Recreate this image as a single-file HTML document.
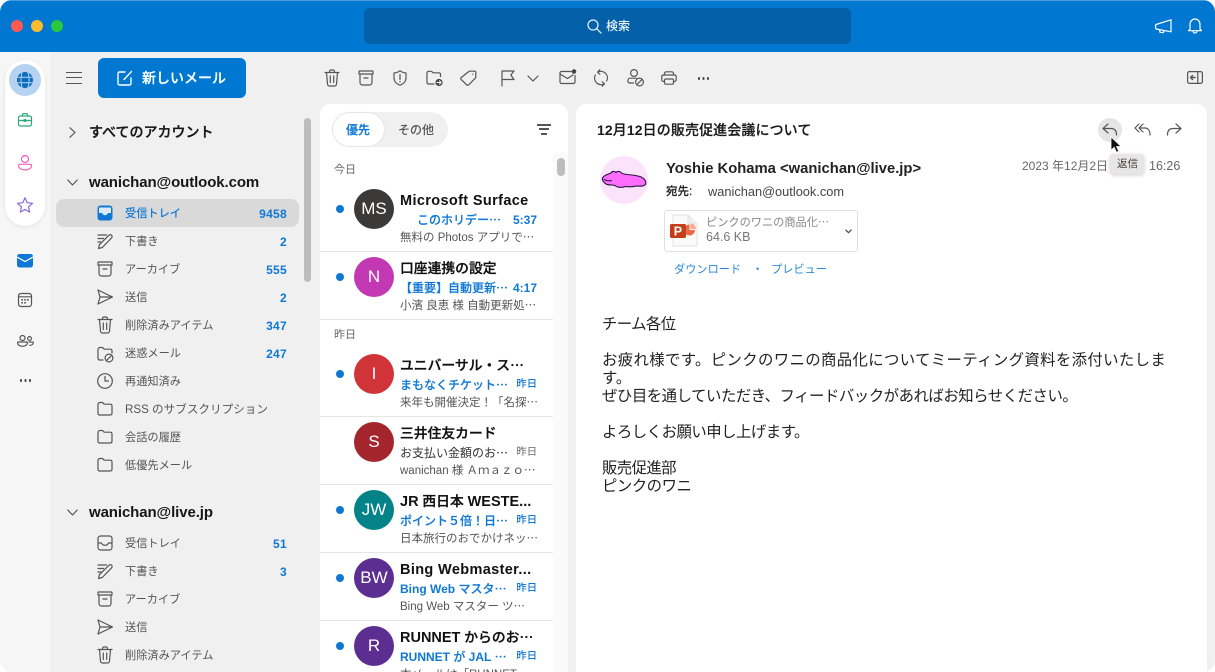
<!DOCTYPE html>
<html lang="ja"><head><meta charset="utf-8"><title>Outlook</title>
<style>
html,body{margin:0;padding:0;background:#fff}
body{width:1215px;height:672px;overflow:hidden;position:relative;font-family:"Liberation Sans","Noto Sans CJK JP",sans-serif;color:#1a1a1a}
#w{position:absolute;left:0;top:0;width:1215px;height:672px;background:#f0f0f0;border-radius:12px;overflow:hidden}
.t{position:absolute;white-space:nowrap;line-height:18px}
.a{position:absolute}
b{-webkit-text-stroke:0;font-weight:700}
svg.i{position:absolute;fill:none;stroke:#555;stroke-width:1.2;stroke-linecap:round;stroke-linejoin:round;overflow:visible}
.f{font-size:11.2px;color:#555;left:125px;margin-top:1px}
.c{font-size:12px;font-weight:700;color:#0f78d4;right:928px;text-align:right;letter-spacing:.3px;margin-top:1px}
.h{font-size:15px;font-weight:700;letter-spacing:-.1px;color:#161616;left:89px}
.sep{position:absolute;left:320px;width:233px;height:1px;background:#e6e6e6}
.dot{position:absolute;left:336px;width:8px;height:8px;border-radius:50%;background:#0f78d4}
.av{position:absolute;left:354px;width:40px;height:40px;border-radius:50%;color:#fff;text-align:center;line-height:40px;font-size:17px}
.n{font-size:13.8px;font-weight:500;-webkit-text-stroke:.3px #111;color:#111;left:400px;margin-top:1px}
.n b{font-size:14.5px}
.l{letter-spacing:.36px}
.s{font-size:12px;font-weight:500;-webkit-text-stroke:.15px #0f78d4;color:#0f78d4;left:400px;margin-top:1px}
.d{font-size:12px;font-weight:700;color:#0f78d4;right:678px;text-align:right;margin-top:1px}
.y{font-size:10.3px;font-weight:500}
.p{font-size:11.5px;color:#555;left:400px;margin-top:1px}
.b{font-size:15.4px;color:#222;left:602px}
</style></head><body>
<div id="w">
<svg width="0" height="0" style="position:absolute"><defs>
<symbol id="trash" viewBox="0 0 16 18"><path d="M1 3.500h14M5.500 3.500V2.600C5.500 1.700 6.200 1 7 1h2c.8 0 1.500.7 1.500 1.600v.9M2.500 3.500l1 11.500c.1 1.100.9 2 2 2h5c1.100 0 1.900-.9 2-2l1-11.500M6.300 7v6.500M9.700 7v6.500"/></symbol>
<symbol id="arch" viewBox="0 0 16 16"><path d="M1.500 1h13c.3 0 .5.200.5.500V4H1V1.500c0-.3.200-.5.500-.5zM2 4v8.500C2 13.900 3.100 15 4.500 15h7c1.400 0 2.500-1.100 2.500-2.500V4M6 8h4"/></symbol>
<symbol id="send" viewBox="0 0 16 16"><path d="M1 1l14.500 7L1 15l2-7zM3 8h12"/></symbol>
<symbol id="draft" viewBox="0 0 16 16"><path d="M1 2h8.500M1 5.500h5.500M1 9h3M1.500 15.500l.9-3.800L12 2.200c.7-.7 2-.7 2.600 0s.7 1.900 0 2.600L5.300 14.500z"/></symbol>
<symbol id="folder" viewBox="0 0 16 16"><path d="M1 3.500C1 2.400 1.700 1.500 2.800 1.500h2.500c.9 0 1.300 1.700 2.200 1.700h5.700c1.100 0 1.800.8 1.800 1.800v7.300c0 1-.7 1.700-1.800 1.700H2.800C1.700 14 1 13.300 1 12.300z"/></symbol>
<symbol id="inbox" viewBox="0 0 16 16"><rect x="1" y="1" width="14" height="14" rx="2.500"/><path d="M1 8h3.500c.6 1.500 2 2.300 3.500 2.300s2.900-.8 3.500-2.300H15"/></symbol>
</defs></svg>

<!-- title bar -->
<div class="a" style="left:0;top:0;width:1215px;height:52px;background:#0078d2;border-top:1px solid #4b9fe0;box-sizing:border-box"></div>
<div class="a" style="left:11px;top:20px;width:12px;height:12px;border-radius:50%;background:#fc5a52"></div>
<div class="a" style="left:31px;top:20px;width:12px;height:12px;border-radius:50%;background:#fdbc2e"></div>
<div class="a" style="left:51px;top:20px;width:12px;height:12px;border-radius:50%;background:#28c83f"></div>
<div class="a" style="left:364px;top:8px;width:487px;height:36px;border-radius:6px;background:#0460a8"></div>
<svg class="i" style="left:587px;top:19px;stroke:#dcecf9;stroke-width:1.300" width="15" height="15" viewBox="0 0 15 15"><circle cx="6" cy="6" r="5"/><path d="M9.700 9.700L14 14"/></svg>
<span class="t" style="left:606px;top:17px;font-size:12px;color:#eaf4fc;font-weight:500">検索</span>
<svg class="i" style="left:1155px;top:19px;stroke:#fff" width="17" height="15" viewBox="0 0 17 15"><path d="M1 5.500L16 .8v12L1 10c-.6-1.500-.6-3 0-4.500zM4.500 11l.5 2.300 3.300.4.500-1.800"/></svg>
<svg class="i" style="left:1188px;top:18px;stroke:#fff" width="14" height="16" viewBox="0 0 14 16"><path d="M2 11V6.500C2 3.400 4.200 1 7 1s5 2.400 5 5.500V11l1.500 1.700H.5zM5 13c.1 1.200 1 2 2 2s1.900-.8 2-2"/></svg>

<!-- rail -->
<div class="a" style="left:0;top:52px;width:50px;height:620px;background:#f6f6f6"></div>
<div class="a" style="left:5px;top:60px;width:40px;height:166px;border-radius:20px;background:#fff;box-shadow:0 1px 4px rgba(0,0,0,.08)"></div>
<div class="a" style="left:9px;top:64px;width:32px;height:32px;border-radius:50%;background:#b5d3f0"></div>
<svg class="a" style="left:17px;top:72px" width="16" height="16" viewBox="0 0 16 16"><circle cx="8" cy="8" r="8" fill="#0b6cbf"/><path d="M0 5.300h16M0 10.700h16M5.200 0c-1.600 5-1.600 11 0 16M10.800 0c1.600 5 1.600 11 0 16" fill="none" stroke="#b5d3f0" stroke-width="1"/></svg>
<svg class="i" style="left:18px;top:113px;stroke:#2fa67c" width="14" height="14" viewBox="0 0 14 14"><rect x=".5" y="3" width="13" height="10" rx="1.800"/><path d="M4.500 3V1.800C4.500 1 5 .6 5.700.6h2.600c.7 0 1.200.4 1.200 1.200V3M.5 7.500h13"/><rect x="6" y="6.700" width="2" height="1.600" fill="#2fa67c"/></svg>
<svg class="i" style="left:18px;top:155px;stroke:#f15ec0" width="14" height="16" viewBox="0 0 14 16"><circle cx="7" cy="4" r="3.500"/><path d="M1.800 9.300h10.400c.8 0 1.300.5 1.300 1.200 0 2.800-3 4.500-6.500 4.500S.5 13.300.5 10.500c0-.7.500-1.200 1.300-1.200z"/></svg>
<svg class="i" style="left:17px;top:197px;stroke:#8a6bd6" width="16" height="16" viewBox="0 0 16 16"><path d="M8 .8l2.200 4.900 5.300.6-4 3.500 1.200 5.300L8 12.400l-4.700 2.700 1.200-5.300-4-3.500 5.300-.6z"/></svg>
<svg class="a" style="left:17px;top:254px" width="16" height="14" viewBox="0 0 16 14"><rect width="16" height="13.500" rx="2.500" fill="#0f78d4"/><path d="M0 3l8 4.500L16 3" fill="none" stroke="#fff" stroke-width="1.200"/></svg>
<svg class="i" style="left:18px;top:293px" width="14" height="14" viewBox="0 0 14 14"><rect x=".5" y=".5" width="13" height="13" rx="2.500"/><path d="M.5 3.800h13"/><rect x="3.300" y="6" width="1.600" height="1.600" fill="#555" stroke="none"/><rect x="6.200" y="6" width="1.600" height="1.600" fill="#555" stroke="none"/><rect x="9.100" y="6" width="1.600" height="1.600" fill="#555" stroke="none"/><rect x="3.300" y="9" width="1.600" height="1.600" fill="#555" stroke="none"/><rect x="6.200" y="9" width="1.600" height="1.600" fill="#555" stroke="none"/></svg>
<svg class="i" style="left:17px;top:335px" width="17" height="12" viewBox="0 0 17 12"><circle cx="5.500" cy="3" r="2.500"/><circle cx="12.500" cy="3.500" r="1.900"/><path d="M1.500 7h8c.5 0 .9.300.9.800C10.400 10 8 11.300 5.500 11.300S.6 10 .6 7.800c0-.5.400-.8.900-.8zM12 7h3.500c.5 0 .8.300.8.700 0 1.500-1.500 2.600-3.600 2.600"/></svg>
<div class="a" style="left:19.500px;top:379px;width:2.500px;height:2.500px;border-radius:50%;background:#444;box-shadow:4.500px 0 0 #444,9px 0 0 #444"></div>

<!-- hamburger & new mail -->
<div class="a" style="left:66px;top:72px;width:16px;height:1.300px;background:#555;box-shadow:0 5px 0 #555,0 11px 0 #555"></div>
<div class="a" style="left:98px;top:58px;width:148px;height:40px;border-radius:6px;background:#0078d2"></div>
<svg class="i" style="left:117px;top:70px;stroke:#fff;stroke-width:1.400" width="16" height="16" viewBox="0 0 16 16"><path d="M8 2H2.500C1.700 2 1 2.700 1 3.500v10c0 .8.700 1.500 1.500 1.500h10c.8 0 1.500-.7 1.500-1.500V8M7 9.500L14.500 1.500"/></svg>
<span class="t" style="left:142px;top:69px;font-size:14px;color:#fff;font-weight:500;-webkit-text-stroke:.2px #fff">新しいメール</span>

<!-- toolbar -->
<svg class="i" style="left:324px;top:69px" width="16" height="18"><use href="#trash"/></svg>
<svg class="i" style="left:358px;top:70px" width="16" height="16"><use href="#arch"/></svg>
<svg class="i" style="left:393px;top:70px" width="14" height="16" viewBox="0 0 14 16"><path d="M7 .8c1.800 1.300 3.800 2 6 2.200v5c0 3.300-2.500 6-6 7.200C3.500 14 1 11.300 1 8V3c2.200-.2 4.200-.9 6-2.200zM7 4.500v5M7 11.500v.3"/></svg>
<svg class="i" style="left:426px;top:70px" width="18" height="18" viewBox="0 0 18 18"><path d="M8 14H2.500C1.500 14 1 13.300 1 12.300V3C1 2 1.700 1.300 2.700 1.300h2.500c.9 0 1.300 1.500 2.200 1.500h5.500c1 0 1.600.8 1.600 1.700v2"/><circle cx="13" cy="12.500" r="4.200" fill="#444" stroke="#f0f0f0"/><path d="M11 12.500h4M13.500 10.800l1.600 1.700-1.600 1.700" stroke="#fff" stroke-width="1"/></svg>
<svg class="i" style="left:460px;top:70px" width="17" height="16" viewBox="0 0 17 16"><path d="M9.800 1.200h5c.6 0 1 .4 1 1v4.900c0 .5-.2.800-.5 1.100l-6.700 6.700c-.6.500-1.300.5-1.800 0L1.100 9.400c-.5-.6-.5-1.300 0-1.800L8.700 1.600c.3-.3.700-.4 1.100-.4zM12.800 4.200v.1"/></svg>
<svg class="i" style="left:501px;top:70px" width="14" height="17" viewBox="0 0 14 17"><path d="M1 16V1h12L9.800 5 13 9.500H1"/></svg>
<svg class="i" style="left:527px;top:75px" width="12" height="7" viewBox="0 0 12 7"><path d="M1 1l5 5 5-5"/></svg>
<svg class="i" style="left:559px;top:69px" width="18" height="16" viewBox="0 0 18 16"><path d="M12 2.500H2.500C1.700 2.500 1 3.200 1 4v9c0 .8.700 1.500 1.500 1.500h12c.8 0 1.500-.7 1.500-1.500V6.500M1 5l7.500 4.500L14 6"/><circle cx="15" cy="2.500" r="2.300" fill="#444" stroke="none"/></svg>
<svg class="i" style="left:593px;top:69px" width="16" height="18" viewBox="0 0 16 18"><path d="M4.500 3.200C6.700 1.800 10 2 12.300 4c2.400 2.400 2.800 5.500 1.300 8M11.500 14.800C9.300 16.200 6 16 3.700 14 1.300 11.600.9 8.500 2.400 6M6.800.8L4.500 3.200l2.300 2M9.200 17.200l2.300-2.400-2.300-2"/></svg>
<svg class="i" style="left:627px;top:69px" width="17" height="18" viewBox="0 0 17 18"><circle cx="7" cy="4" r="3.400"/><path d="M6.500 14H3C1.800 14 .8 13 .8 12c0-1.600 1-2.800 2.500-2.800h6"/><circle cx="12.500" cy="13" r="3.900"/><path d="M9.800 15.700l5.400-5.400"/></svg>
<svg class="i" style="left:661px;top:71px" width="16" height="14" viewBox="0 0 16 14"><path d="M3.500 4V2.500C3.500 1.500 4.300.8 5.200.8h5.600c.9 0 1.700.7 1.700 1.700V4M3.500 10.500H2.500C1.500 10.500.8 9.700.8 8.800V5.700C.8 4.700 1.500 4 2.500 4h11c1 0 1.700.7 1.700 1.700v3.100c0 .9-.7 1.700-1.700 1.700h-1"/><rect x="3.500" y="8" width="9" height="5.200" rx="1.200"/></svg>
<div class="a" style="left:697.500px;top:77px;width:2.500px;height:2.500px;border-radius:50%;background:#444;box-shadow:4.500px 0 0 #444,9px 0 0 #444"></div>
<svg class="i" style="left:1187px;top:71px" width="16" height="13" viewBox="0 0 16 13"><rect x=".6" y=".6" width="14.800" height="11.800" rx="1.800"/><path d="M10.800.6v11.800"/><path d="M8 6.500H3.500M5.500 4.500l-2 2 2 2" stroke-width="1.400"/></svg>

<!-- folders -->
<div class="a" style="left:304px;top:118px;width:7px;height:164px;border-radius:4px;background:#bcbcbc"></div>
<svg class="i" style="left:69px;top:127px" width="7" height="11" viewBox="0 0 7 11"><path d="M1 .8l5 4.700-5 4.700"/></svg>
<span class="t h" style="top:123px;font-size:14px;font-weight:500;letter-spacing:0;-webkit-text-stroke:.3px #161616">すべてのアカウント</span>
<svg class="i" style="left:67px;top:179px" width="11" height="7" viewBox="0 0 11 7"><path d="M.8 1l4.700 5 4.700-5"/></svg>
<span class="t h" style="top:174px">wanichan@outlook.com</span>

<div class="a" style="left:56px;top:199px;width:243px;height:28px;border-radius:8px;background:#d9d9d9"></div>
<svg class="a" style="left:97px;top:205px" width="16" height="16" viewBox="0 0 16 16"><rect width="15" height="15" x=".5" y=".5" rx="3" fill="#0f78d4"/><path d="M2 2.500h12V8h-3c-.6 1.500-1.700 2.200-3 2.200S5.600 9.500 5 8H2z" fill="#d9e9f6"/></svg>
<span class="t f" style="top:204px;color:#0f78d4;font-weight:500">受信トレイ</span><span class="t c" style="top:204px">9458</span>
<svg class="i" style="left:97px;top:233px" width="16" height="16"><use href="#draft"/></svg>
<span class="t f" style="top:232px">下書き</span><span class="t c" style="top:232px">2</span>
<svg class="i" style="left:97px;top:261px" width="16" height="16"><use href="#arch"/></svg>
<span class="t f" style="top:260px">アーカイブ</span><span class="t c" style="top:260px">555</span>
<svg class="i" style="left:97px;top:289px" width="16" height="16"><use href="#send"/></svg>
<span class="t f" style="top:288px">送信</span><span class="t c" style="top:288px">2</span>
<svg class="i" style="left:97px;top:316px" width="16" height="18"><use href="#trash"/></svg>
<span class="t f" style="top:316px">削除済みアイテム</span><span class="t c" style="top:316px">347</span>
<svg class="i" style="left:97px;top:346px" width="17" height="17" viewBox="0 0 17 17"><path d="M6 14H2.800C1.700 14 1 13.300 1 12.300V3.500C1 2.400 1.700 1.500 2.800 1.500h2.500c.9 0 1.300 1.700 2.200 1.700h5.700c1.100 0 1.800.8 1.800 1.800V7"/><circle cx="12" cy="12" r="3.900"/><path d="M9.300 14.700l5.400-5.400"/></svg>
<span class="t f" style="top:344px">迷惑メール</span><span class="t c" style="top:344px">247</span>
<svg class="i" style="left:97px;top:373px" width="16" height="16" viewBox="0 0 16 16"><circle cx="8" cy="8" r="7.300"/><path d="M8 3.500V8h3.500"/></svg>
<span class="t f" style="top:372px">再通知済み</span>
<svg class="i" style="left:97px;top:401px" width="16" height="16"><use href="#folder"/></svg>
<span class="t f" style="top:400px;font-size:11.6px">RSS のサブスクリプション</span>
<svg class="i" style="left:97px;top:429px" width="16" height="16"><use href="#folder"/></svg>
<span class="t f" style="top:428px">会話の履歴</span>
<svg class="i" style="left:97px;top:457px" width="16" height="16"><use href="#folder"/></svg>
<span class="t f" style="top:456px">低優先メール</span>

<svg class="i" style="left:67px;top:509px" width="11" height="7" viewBox="0 0 11 7"><path d="M.8 1l4.700 5 4.700-5"/></svg>
<span class="t h" style="top:504px">wanichan@live.jp</span>
<svg class="i" style="left:97px;top:535px" width="16" height="16"><use href="#inbox"/></svg>
<span class="t f" style="top:534px">受信トレイ</span><span class="t c" style="top:534px">51</span>
<svg class="i" style="left:97px;top:563px" width="16" height="16"><use href="#draft"/></svg>
<span class="t f" style="top:562px">下書き</span><span class="t c" style="top:562px">3</span>
<svg class="i" style="left:97px;top:591px" width="16" height="16"><use href="#arch"/></svg>
<span class="t f" style="top:590px">アーカイブ</span>
<svg class="i" style="left:97px;top:619px" width="16" height="16"><use href="#send"/></svg>
<span class="t f" style="top:618px">送信</span>
<svg class="i" style="left:97px;top:646px" width="16" height="18"><use href="#trash"/></svg>
<span class="t f" style="top:646px">削除済みアイテム</span>

<!-- list panel -->
<div class="a" style="left:320px;top:104px;width:248px;height:580px;border-radius:10px;background:#fff"></div>
<div class="a" style="left:553px;top:152px;width:15px;height:520px;background:#fafafa"></div>
<div class="a" style="left:557px;top:158px;width:8px;height:18px;border-radius:4px;background:#bdbdbd"></div>
<div class="a" style="left:332px;top:112px;width:116px;height:35px;border-radius:18px;background:#f0f0f0"></div>
<div class="a" style="left:333px;top:113px;width:51px;height:33px;border-radius:17px;background:#fff;box-shadow:0 0 2px rgba(0,0,0,.12)"></div>
<span class="t" style="left:346px;top:121px;font-size:12px;font-weight:500;-webkit-text-stroke:.2px #0f78d4;color:#0f78d4">優先</span>
<span class="t" style="left:398px;top:121px;font-size:12px;font-weight:500;color:#555">その他</span>
<div class="a" style="left:537px;top:124px;width:14px;height:1.500px;background:#555"></div>
<div class="a" style="left:539px;top:128px;width:10px;height:1.500px;background:#555"></div>
<div class="a" style="left:541px;top:133px;width:6px;height:1.500px;background:#555"></div>
<span class="t" style="left:334px;top:161px;font-size:11px;color:#666">今日</span>
<span class="t" style="left:334px;top:326px;font-size:11px;color:#666">昨日</span>
<div class="sep" style="top:251px"></div><div class="sep" style="top:319px"></div><div class="sep" style="top:416px"></div><div class="sep" style="top:484px"></div><div class="sep" style="top:552px"></div><div class="sep" style="top:620px"></div>

<div class="dot" style="top:205px"></div><div class="av" style="top:189px;background:#3b3a39">MS</div>
<span class="t n l" style="top:191px"><b>Microsoft Surface</b></span><span class="t s" style="top:210px;left:417px">このホリデー⋯</span><span class="t d" style="top:210px">5:37</span><span class="t p" style="top:228px">無料の Photos アプリで⋯</span>

<div class="dot" style="top:273px"></div><div class="av" style="top:257px;background:#c239b3">N</div>
<span class="t n" style="top:259px">口座連携の設定</span><span class="t s" style="top:278px">【重要】自動更新⋯</span><span class="t d" style="top:278px">4:17</span><span class="t p" style="top:296px">小濱 良恵 様 自動更新処⋯</span>

<div class="dot" style="top:370px"></div><div class="av" style="top:354px;background:#d13438">I</div>
<span class="t n" style="top:356px">ユニバーサル・ス⋯</span><span class="t s" style="top:375px">まもなくチケット⋯</span><span class="t d y" style="top:375px">昨日</span><span class="t p" style="top:393px">来年も開催決定！「名探⋯</span>

<div class="av" style="top:422px;background:#a4262c">S</div>
<span class="t n" style="top:424px">三井住友カード</span><span class="t s" style="top:443px;font-weight:400;color:#333;-webkit-text-stroke:0">お支払い金額のお⋯</span><span class="t d y" style="top:443px;font-weight:400;color:#666">昨日</span><span class="t p" style="top:461px">wanichan 様 Ａｍａｚｏ⋯</span>

<div class="dot" style="top:506px"></div><div class="av" style="top:490px;background:#038387">JW</div>
<span class="t n" style="top:492px"><b>JR</b> 西日本 <b>WESTE...</b></span><span class="t s" style="top:511px">ポイント５倍！日⋯</span><span class="t d y" style="top:511px">昨日</span><span class="t p" style="top:529px">日本旅行のおでかけネッ⋯</span>

<div class="dot" style="top:574px"></div><div class="av" style="top:558px;background:#5c2e91">BW</div>
<span class="t n l" style="top:560px"><b>Bing Webmaster...</b></span><span class="t s" style="top:579px"><b>Bing Web</b> マスタ⋯</span><span class="t d y" style="top:579px">昨日</span><span class="t p" style="top:597px">Bing Web マスター ツ⋯</span>

<div class="dot" style="top:642px"></div><div class="av" style="top:626px;background:#5c2e91">R</div>
<span class="t n" style="top:628px"><b>RUNNET</b> からのお⋯</span><span class="t s" style="top:647px"><b>RUNNET</b> が <b>JAL</b> ⋯</span><span class="t d y" style="top:647px">昨日</span><span class="t p" style="top:665px">本メールは「RUNNET⋯</span>

<!-- reading pane -->
<div class="a" style="left:576px;top:104px;width:631px;height:580px;border-radius:10px;background:#fff"></div>
<span class="t" style="left:597px;top:121px;font-size:14px;font-weight:500;-webkit-text-stroke:.2px #1a1a1a;color:#1a1a1a;letter-spacing:.1px"><b>12</b>月<b>12</b>日の販売促進会議について</span>
<div class="a" style="left:1098px;top:118px;width:24px;height:24px;border-radius:50%;background:#e5e5e5"></div>
<svg class="i" style="left:1102px;top:123px" width="16" height="13" viewBox="0 0 16 13"><path d="M6 1L1 5.500l5 4.500M1 5.500h8c3.500 0 5.500 2.300 5.500 6.500"/></svg>
<svg class="i" style="left:1134px;top:123px" width="17" height="13" viewBox="0 0 17 13"><path d="M5 1L1 5l4 4M9 1L5 5l4 4M5 5h6c3 0 5 2.500 5 7"/></svg>
<svg class="i" style="left:1166px;top:123px" width="16" height="13" viewBox="0 0 16 13"><path d="M10 1l5 4.500-5 4.500M15 5.500H7C3.500 5.500 1.500 7.800 1.500 12"/></svg>
<div class="a" style="left:600px;top:156px;width:48px;height:48px;border-radius:50%;background:#fbe3fb"></div>
<svg class="a" style="left:601px;top:170px" width="46" height="18" viewBox="0 0 46 18"><path d="M1.500 8C3 5 8 4 10 3 11 1 14 1 15 2.500 16 1 19 1 20 2.500 21 4 23 4 26 4.500 32 5 38 5.500 41 7.500 44 9 45.500 12 44.500 14.500 42 17 38 16 35 16 31 17.500 27 16.500 24 16.500 21 18 16 17.500 14 15.500 11 14.500 7 15.500 5 14 3 12.500 1 10 1.500 8z" fill="#ff6dff" stroke="#26163c" stroke-width="1.100" stroke-linejoin="round"/><path d="M3 9.500C6 11 9 11 11 10.500" fill="none" stroke="#26163c" stroke-width="1"/></svg>
<span class="t" style="left:666px;top:160px;font-size:14.8px;font-weight:700;color:#222">Yoshie Kohama &lt;wanichan@live.jp&gt;</span>
<span class="t" style="left:666px;top:183px;font-size:11.500px;font-weight:500;-webkit-text-stroke:.2px #222;color:#222">宛先:</span>
<span class="t" style="left:708px;top:183px;font-size:12.800px;color:#444">wanichan@outlook.com</span>
<span class="t" style="left:1022px;top:157px;font-size:12px;color:#666">2023 年12月2日</span>
<span class="t" style="left:1149px;top:157px;font-size:12.500px;color:#666">16:26</span>
<div class="a" style="left:664px;top:210px;width:194px;height:42px;box-sizing:border-box;border:1px solid #e0e0e0;border-radius:3px"></div>
<svg class="a" style="left:669px;top:214px" width="30" height="33" viewBox="0 0 30 33"><path d="M4 1h15l9 9v22H4z" fill="#fafafa" stroke="#e2e2e2"/><path d="M19 1v9h9" fill="#f0f0f0" stroke="#e2e2e2"/><path d="M20.500 10.500a5.500 5.500 0 1 0 5.500 5.500h-5.500z" fill="#ed6c47"/><path d="M21.500 9.500a5.500 5.500 0 0 1 5.500 5.500h-5.500z" fill="#ffa78f"/><rect x="1" y="10" width="16" height="14" rx="1.500" fill="#c43e1c"/><text x="4.800" y="21.500" font-family="Liberation Sans" font-size="12.500" font-weight="700" fill="#fff">P</text></svg>
<span class="t" style="left:706px;top:214px;font-size:11.200px;color:#888">ピンクのワニの商品化⋯</span>
<span class="t" style="left:706px;top:228px;font-size:12.500px;color:#777">64.6 KB</span>
<svg class="i" style="left:845px;top:229px;stroke:#444" width="7" height="5" viewBox="0 0 7 5"><path d="M.8 1l2.700 2.700L6.200 1"/></svg>
<span class="t" style="left:674px;top:261px;font-size:11.200px;color:#2b88d8">ダウンロード</span>
<span class="t" style="left:752px;top:261px;font-size:11.200px;color:#2b88d8">・</span>
<span class="t" style="left:771px;top:261px;font-size:11.200px;color:#2b88d8">プレビュー</span>

<span class="t b" style="top:316px;letter-spacing:-.6px">チーム各位</span>
<span class="t b" style="top:352px;letter-spacing:.36px">お疲れ様です。ピンクのワニの商品化についてミーティング資料を添付いたしま</span>
<span class="t b" style="top:370px">す。</span>
<span class="t b" style="top:388px;letter-spacing:-.47px">ぜひ目を通していただき、フィードバックがあればお知らせください。</span>
<span class="t b" style="top:424px;letter-spacing:-.5px">よろしくお願い申し上げます。</span>
<span class="t b" style="top:460px;letter-spacing:-.6px">販売促進部</span>
<span class="t b" style="top:478px;letter-spacing:-.5px">ピンクのワニ</span>

<!-- tooltip + cursor -->
<div class="a" style="left:1110px;top:154px;width:34px;height:20px;border-radius:3px;background:#e8e6e4;box-shadow:0 1px 4px rgba(0,0,0,.2)"></div>
<span class="t" style="left:1117px;top:155px;font-size:10.500px;color:#444">返信</span>
<svg class="a" style="left:1110px;top:136px" width="12" height="18" viewBox="0 0 12 18"><path d="M1 .8v13.500l3.200-3 2.200 5 2.400-1-2.200-4.800h4.500z" fill="#111" stroke="#fff" stroke-width=".8"/></svg>
</div>
</body></html>
